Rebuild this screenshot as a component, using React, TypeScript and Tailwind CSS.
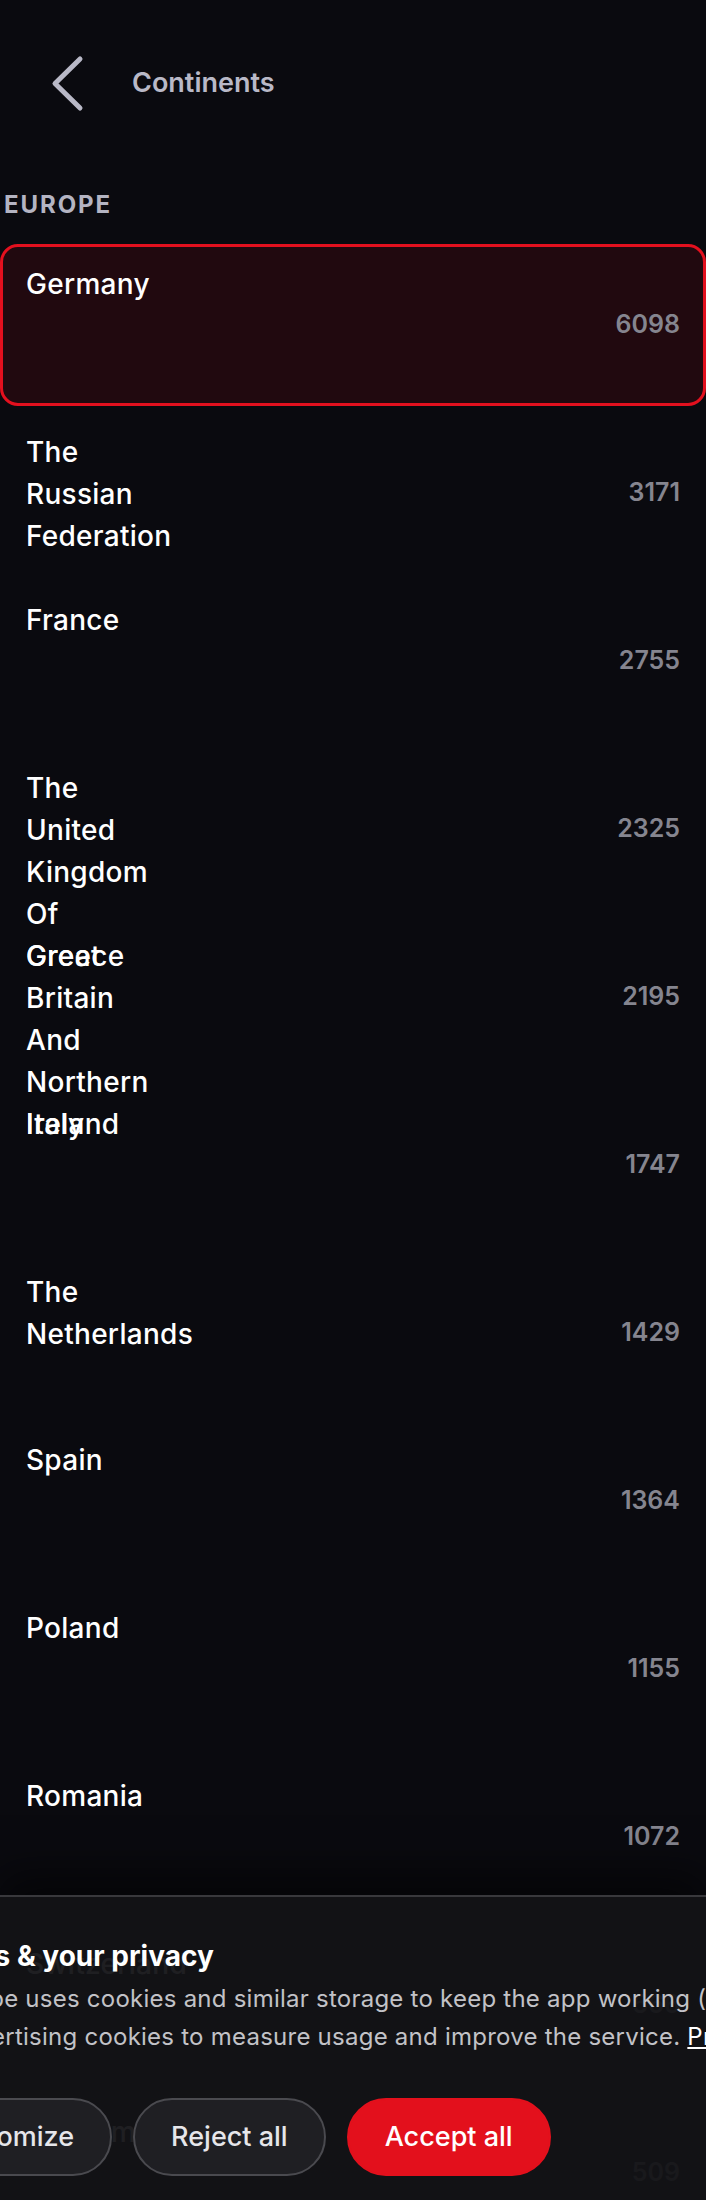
import React from 'react'

interface Country { name: string; count: number }

const COUNTRIES: Country[] = [
  { name: 'Germany', count: 6098 },
  { name: 'The Russian Federation', count: 3171 },
  { name: 'France', count: 2755 },
  { name: 'The United Kingdom Of Great Britain And Northern Ireland', count: 2325 },
  { name: 'Greece', count: 2195 },
  { name: 'Italy', count: 1747 },
  { name: 'The Netherlands', count: 1429 },
  { name: 'Spain', count: 1364 },
  { name: 'Poland', count: 1155 },
  { name: 'Romania', count: 1072 },
  { name: 'Switzerland', count: 566 },
  { name: 'Belgium', count: 509 },
  { name: 'Portugal', count: 488 },
]

function BackIcon() {
  return (
    <svg width="36" height="57" viewBox="0 0 36 57" fill="none">
      <polyline points="30,4 5,28.5 30,53" stroke="#b9b9c7" strokeWidth="5" strokeLinecap="round" strokeLinejoin="round" />
    </svg>
  )
}

function CountryRow({ country, selected }: { country: Country; selected: boolean }) {
  return (
    <div
      className={
        selected
          ? 'flex h-[162px] justify-between rounded-[18px] border-[3px] border-[#e3101e] bg-[#21090f] px-[23px] pt-[16px]'
          : 'flex h-[162px] justify-between rounded-[18px] border-[3px] border-transparent px-[23px] pt-[16px]'
      }
    >
      <div className="w-0 self-start text-[28px] font-medium leading-[42px] tracking-[0.01em] text-white">
        {country.name}
      </div>
      <div className="-mt-[16px] self-center text-[25px] font-semibold text-[#85858f]">{country.count}</div>
    </div>
  )
}

export default function App() {
  return (
    <div className="relative h-[2200px] overflow-hidden bg-[#0a0a0f] font-['Inter',sans-serif]">
      <div className="flex h-[166px] items-center gap-[46px] pl-[50px]">
        <BackIcon />
        <span className="text-[27px] font-semibold text-[#b9b9c7]">Continents</span>
      </div>

      <div className="mb-[23px] mt-[23px] h-[32px] pl-[4px] text-[24px] font-bold leading-[32px] tracking-[0.08em] text-[#b4b4c2]">
        EUROPE
      </div>

      <div className="flex flex-col gap-[6px]">
        {COUNTRIES.map((c, i) => (
          <CountryRow key={c.name} country={c} selected={i === 0} />
        ))}
      </div>

      <div className="absolute inset-x-0 bottom-0 overflow-hidden border-t-2 border-[#38383c] bg-[#131316]/95 shadow-[0_-20px_40px_rgba(0,0,0,0.55)]">
        <div className="relative left-1/2 w-[956px] -translate-x-1/2 px-6 pb-6 pt-[41px]">
          <h2 className="text-[28px] font-bold leading-[36px] text-white">Cookies &amp; your privacy</h2>
          <p className="mt-[6px] whitespace-nowrap text-[24px] leading-[38px] tracking-[0.01em] text-[#c2c2c7]">
            The Globe uses cookies and similar storage to keep the app working (essential) and, with your consent,
            <br />
            and advertising cookies to measure usage and improve the service.{' '}
            <a className="text-white underline">Privacy policy</a>
          </p>
          <div className="mt-[42px] flex gap-[21px]">
            <button className="h-[78px] rounded-full border-2 border-[#4a4a4f] bg-[#1f1f23] px-9 text-[27px] font-medium text-[#e6e6ea]">
              Customize
            </button>
            <button className="h-[78px] rounded-full border-2 border-[#4a4a4f] bg-[#1f1f23] px-9 text-[27px] font-medium text-[#e6e6ea]">
              Reject all
            </button>
            <button className="h-[78px] rounded-full border-2 border-[#e3101c] bg-[#e3101c] px-9 text-[27px] font-medium text-white">
              Accept all
            </button>
          </div>
        </div>
      </div>
    </div>
  )
}
